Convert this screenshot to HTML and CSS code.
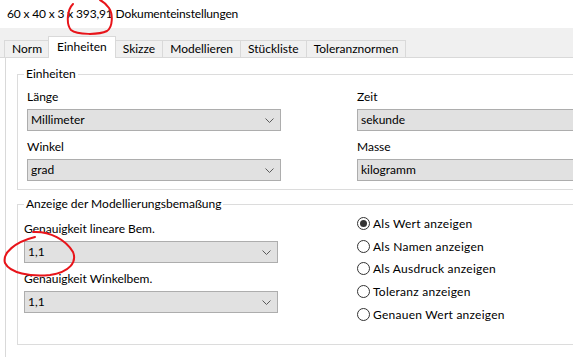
FILE: index.html
```html
<!DOCTYPE html>
<html lang="de">
<head>
<meta charset="utf-8">
<title>Dokumenteinstellungen</title>
<link rel="stylesheet" href="styles.css">
</head>
<body>
<div class="title">60 x 40 x 3 x 393,91 Dokumenteinstellungen</div>
<div class="tabbar">
  <div class="tab">Norm</div>
  <div class="tab active">Einheiten</div>
  <div class="tab">Skizze</div>
  <div class="tab">Modellieren</div>
  <div class="tab">Stückliste</div>
  <div class="tab">Toleranznormen</div>
</div>
<div class="panel">
  <fieldset class="group g1">
    <legend>Einheiten</legend>
    <div class="cols">
      <div class="col">
        <div class="field">
          <div class="label">Länge</div>
          <div class="select"><span>Millimeter</span><svg class="chev" width="9" height="5" viewBox="0 0 9 5"><polyline points="0.5,0.5 4.5,4.5 8.5,0.5"/></svg></div>
        </div>
        <div class="field">
          <div class="label">Winkel</div>
          <div class="select"><span>grad</span><svg class="chev" width="9" height="5" viewBox="0 0 9 5"><polyline points="0.5,0.5 4.5,4.5 8.5,0.5"/></svg></div>
        </div>
      </div>
      <div class="col">
        <div class="field">
          <div class="label">Zeit</div>
          <div class="input">sekunde</div>
        </div>
        <div class="field">
          <div class="label">Masse</div>
          <div class="input">kilogramm</div>
        </div>
      </div>
    </div>
  </fieldset>
  <fieldset class="group g2">
    <legend>Anzeige der Modellierungsbemaßung</legend>
    <div class="cols">
      <div class="col">
        <div class="field">
          <div class="label">Genauigkeit lineare Bem.</div>
          <div class="select"><span>1,1</span><svg class="chev" width="9" height="5" viewBox="0 0 9 5"><polyline points="0.5,0.5 4.5,4.5 8.5,0.5"/></svg></div>
        </div>
        <div class="field">
          <div class="label">Genauigkeit Winkelbem.</div>
          <div class="select"><span>1,1</span><svg class="chev" width="9" height="5" viewBox="0 0 9 5"><polyline points="0.5,0.5 4.5,4.5 8.5,0.5"/></svg></div>
        </div>
      </div>
      <div class="col radios">
        <div class="radio checked"><span class="dot"></span>Als Wert anzeigen</div>
        <div class="radio"><span class="dot"></span>Als Namen anzeigen</div>
        <div class="radio"><span class="dot"></span>Als Ausdruck anzeigen</div>
        <div class="radio"><span class="dot"></span>Toleranz anzeigen</div>
        <div class="radio"><span class="dot"></span>Genauen Wert anzeigen</div>
      </div>
    </div>
  </fieldset>
  <fieldset class="group g3">
    <legend>Vorgabeparameter-Eingabeanzeige</legend>
  </fieldset>
</div>
<svg class="annot" width="573" height="357" viewBox="0 0 573 357">
  <path d="M73,4 C67,10 66,24 71,30 C77,35 99,35 107,31 C113,27 113,14 109,8 C107,5 104,2 100,0"/>
  <path d="M33,232 C50,231 66,240 73,252 C77,262 70,272 50,275 C30,277 10,273 5,263 C2,253 15,242 35,237"/>
</svg>
</body>
</html>
```

FILE: styles.css
```css
html, body {
  margin: 0;
  padding: 0;
}
body {
  position: relative;
  width: 573px;
  height: 357px;
  overflow: hidden;
  background: #fff;
  color: #000;
  font-family: Lato, "Noto Sans", sans-serif;
  font-size: 12px;
}
.title {
  height: 28px;
  line-height: 28px;
  padding-left: 7px;
  letter-spacing: -0.15px;
  white-space: nowrap;
}
.tabbar {
  display: flex;
  align-items: flex-end;
  height: 29px;
  padding-left: 4px;
  background: #f0f0f0;
  border-bottom: 1px solid #d9d9d9;
}
.tab {
  height: 16px;
  line-height: 15px;
  padding: 0 7px;
  border: 1px solid #d9d9d9;
  border-bottom: none;
  margin-right: -1px;
  background: #f0f0f0;
  white-space: nowrap;
}
.tab.active {
  position: relative;
  z-index: 1;
  height: 21px;
  line-height: 19px;
  margin-bottom: -1px;
  margin-left: -1px;
  padding: 0 8px;
  background: #fff;
}
.panel {
  margin-left: 5px;
  padding-left: 11px;
  border-left: 1px solid #d9d9d9;
  height: 299px;
  overflow: hidden;
}
.group {
  box-sizing: border-box;
  width: 556px;
  margin: 0;
  padding: 0;
  min-width: 0;
  border: 1px solid #dcdcdc;
  border-right: none;
}
.group legend {
  margin-left: 6px;
  padding: 0 2px;
  line-height: 16px;
  white-space: nowrap;
}
.g1 { margin-top: 8px; }
.g2 { margin-top: 6px; }
.g3 { margin-top: 10px; }
.cols {
  display: grid;
  grid-template-columns: 254px 1fr;
}
.g1 .cols {
  padding: 7px 0 8px 9px;
  column-gap: 76px;
}
.g2 .cols {
  padding: 9px 0 19px 6px;
  column-gap: 79px;
}
.col {
  display: flex;
  flex-direction: column;
  gap: 8px;
}
.label {
  line-height: 16px;
  margin-bottom: 4px;
  white-space: nowrap;
}
.select, .input {
  box-sizing: border-box;
  height: 22px;
  line-height: 20px;
  padding-left: 3px;
  background: #e1e1e1;
  border: 1px solid #adadad;
  white-space: nowrap;
}
.select {
  display: flex;
  justify-content: space-between;
  align-items: center;
  padding-right: 6px;
}
.input {
  border-right: none;
}
.chev {
  fill: none;
  stroke: #5a5a5a;
  stroke-width: 1;
}
.radios {
  gap: 0;
  margin-top: -9px;
}
.radio {
  display: flex;
  align-items: center;
  height: 22.7px;
  letter-spacing: 0.25px;
  white-space: nowrap;
}
.dot {
  box-sizing: border-box;
  width: 13px;
  height: 13px;
  margin-right: 3px;
  border: 1px solid #333;
  border-radius: 50%;
  background: #fff;
  position: relative;
}
.radio.checked .dot::after {
  content: "";
  position: absolute;
  left: 2px;
  top: 2px;
  width: 7px;
  height: 7px;
  border-radius: 50%;
  background: #333;
}
.annot {
  position: absolute;
  left: 0;
  top: 0;
  pointer-events: none;
  fill: none;
  stroke: #e8141a;
  stroke-width: 2;
  stroke-linecap: round;
}
```
